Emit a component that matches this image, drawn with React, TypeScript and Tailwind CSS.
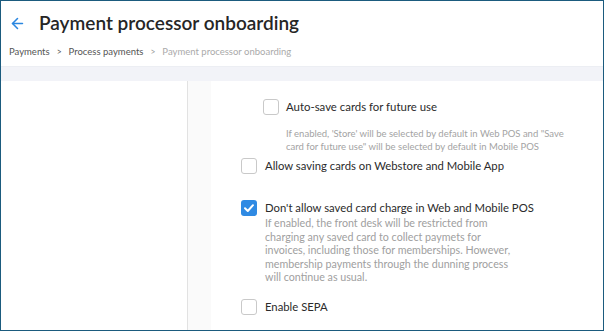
import { ArrowLeft } from 'lucide-react';

const Checkbox = ({ checked = false }: { checked?: boolean }) => (
  <div
    className={
      checked
        ? 'w-[16px] h-[16px] shrink-0 rounded-[3px] bg-[#2f8ae3] flex items-center justify-center'
        : 'w-[16px] h-[16px] shrink-0 rounded-[3px] border border-[#c9c9c9] bg-white'
    }
  >
    {checked && (
      <svg width="12" height="12" viewBox="0 0 12 12" fill="none">
        <path d="M2 6.3 L4.8 9 L10 3.2" stroke="white" strokeWidth="2" strokeLinecap="round" strokeLinejoin="round" />
      </svg>
    )}
  </div>
);

const App = () => {
  return (
    <div className="w-[604px] h-[331px] border border-[#1b5b7e] bg-white flex flex-col overflow-hidden font-['Lato',sans-serif]">
      {/* Header */}
      <div className="h-[65px] shrink-0 px-[8px] pt-[11px]">
        <div className="flex items-center gap-[13px]">
          <ArrowLeft className="w-[17px] h-[17px] text-[#2b87e0]" strokeWidth={2.2} />
          <h1 className="text-[19px] leading-[22px] font-semibold text-[#262626]">Payment processor onboarding</h1>
        </div>
        <div className="mt-[12px] flex items-center text-[9.5px] leading-[12px] text-[#555]">
          <span>Payments</span>
          <span className="mx-[7px] text-[8.5px]">&gt;</span>
          <span>Process payments</span>
          <span className="mx-[7px] text-[8.5px] text-[#999]">&gt;</span>
          <span className="text-[#aaa]">Payment processor onboarding</span>
        </div>
      </div>

      <div className="h-[15px] shrink-0 bg-[#f2f3f8] border-t border-[#eceef3]" />

      {/* Body */}
      <div className="flex flex-1">
        <div className="w-[187px] border-r border-[#e2e2e2] bg-white" />
        <div className="w-[23px] bg-[#fafafa]" />
        <div className="flex-1 pl-[30px] pt-[18px] text-[#2b2b2b]">
          <div className="pl-[22px] flex items-center gap-[7px]">
            <Checkbox />
            <span className="text-[11.4px] leading-[16px]">Auto-save cards for future use</span>
          </div>
          <p className="ml-[45px] mt-[12px] w-[290px] text-[9.5px] leading-[13px] text-[#a3a3a3]">
            If enabled, 'Store' will be selected by default in Web POS and "Save card for future use" will be selected by default in Mobile POS
          </p>
          <div className="mt-[5px] flex items-center gap-[8px]">
            <Checkbox />
            <span className="text-[11.3px] leading-[16px]">Allow saving cards on Webstore and Mobile App</span>
          </div>
          <div className="mt-[26px] flex items-center gap-[8px]">
            <Checkbox checked />
            <span className="text-[11.3px] leading-[16px]">Don't allow saved card charge in Web and Mobile POS</span>
          </div>
          <p className="ml-[24px] mt-0 w-[250px] text-[10.7px] leading-[13.5px] text-[#a0a0a0]">
            If enabled, the front desk will be restricted from charging any saved card to collect paymets for invoices, including those for memberships. However, membership payments through the dunning process will continue as usual.
          </p>
          <div className="mt-[15px] flex items-center gap-[8px]">
            <Checkbox />
            <span className="text-[11.3px] leading-[16px]">Enable SEPA</span>
          </div>
        </div>
      </div>
    </div>
  );
};

export default App;
